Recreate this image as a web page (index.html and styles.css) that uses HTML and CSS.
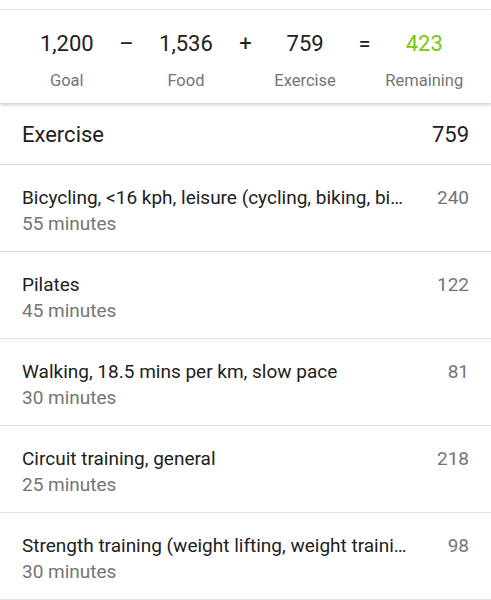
FILE: index.html
```html
<!DOCTYPE html>
<html>
<head>
<meta charset="utf-8">
<link rel="stylesheet" href="styles.css">
</head>
<body>
<div class="summary">
  <div class="cell"><div class="num">1,200</div><div class="lbl">Goal</div></div>
  <div class="cell"><div class="op">–</div></div>
  <div class="cell"><div class="num">1,536</div><div class="lbl">Food</div></div>
  <div class="cell"><div class="op">+</div></div>
  <div class="cell"><div class="num">759</div><div class="lbl">Exercise</div></div>
  <div class="cell"><div class="op">=</div></div>
  <div class="cell"><div class="num green">423</div><div class="lbl">Remaining</div></div>
</div>
<div class="section-head"><span>Exercise</span><span>759</span></div>
<div class="row"><div class="info"><div class="title">Bicycling, &lt;16 kph, leisure (cycling, biking, bi…</div><div class="sub">55 minutes</div></div><div class="cal">240</div></div>
<div class="row"><div class="info"><div class="title">Pilates</div><div class="sub">45 minutes</div></div><div class="cal">122</div></div>
<div class="row"><div class="info"><div class="title">Walking, 18.5 mins per km, slow pace</div><div class="sub">30 minutes</div></div><div class="cal">81</div></div>
<div class="row"><div class="info"><div class="title">Circuit training, general</div><div class="sub">25 minutes</div></div><div class="cal">218</div></div>
<div class="row"><div class="info"><div class="title">Strength training (weight lifting, weight traini…</div><div class="sub">30 minutes</div></div><div class="cal">98</div></div>
</body>
</html>
```
FILE: styles.css
```css
html, body { margin: 0; padding: 0; background: #fff; }
body { font-family: Roboto, "Noto Sans", sans-serif; color: #212121; width: 491px; height: 600px; overflow: hidden; }
.summary {
  margin-top: 9px;
  border-top: 1px solid #e4e4e4;
  height: 94px;
  box-sizing: border-box;
  padding: 0 37px;
  display: grid;
  grid-template-columns: repeat(7, minmax(0, 1fr));
  box-shadow: 0 2px 3px rgba(0,0,0,0.2);
  position: relative;
}
.cell { display: flex; flex-direction: column; align-items: center; padding-top: 20px; white-space: nowrap; }
.num { font-size: 22px; line-height: 28px; color: #212121; }
.num.green { color: #7ac70c; }
.op { font-size: 22px; line-height: 28px; color: #212121; }
.lbl { font-size: 16.5px; line-height: 22px; color: #757575; margin-top: 12px; }
.section-head {
  height: 62px; box-sizing: border-box; padding: 1px 22px 0 22px;
  display: flex; justify-content: space-between; align-items: center;
  font-size: 22px; border-bottom: 1px solid #e0e0e0;
}
.row {
  height: 87px; box-sizing: border-box; border-bottom: 1px solid #e0e0e0;
  display: flex; padding: 21px 22px 0 22px;
}
.info { flex: 1; min-width: 0; padding-right: 20px; }
.title { font-size: 19px; line-height: 24px; white-space: nowrap; overflow: hidden; color: #212121; }
.sub { font-size: 19px; line-height: 24px; color: #757575; margin-top: 2px; }
.cal { font-size: 19px; line-height: 24px; color: #757575; }
```
